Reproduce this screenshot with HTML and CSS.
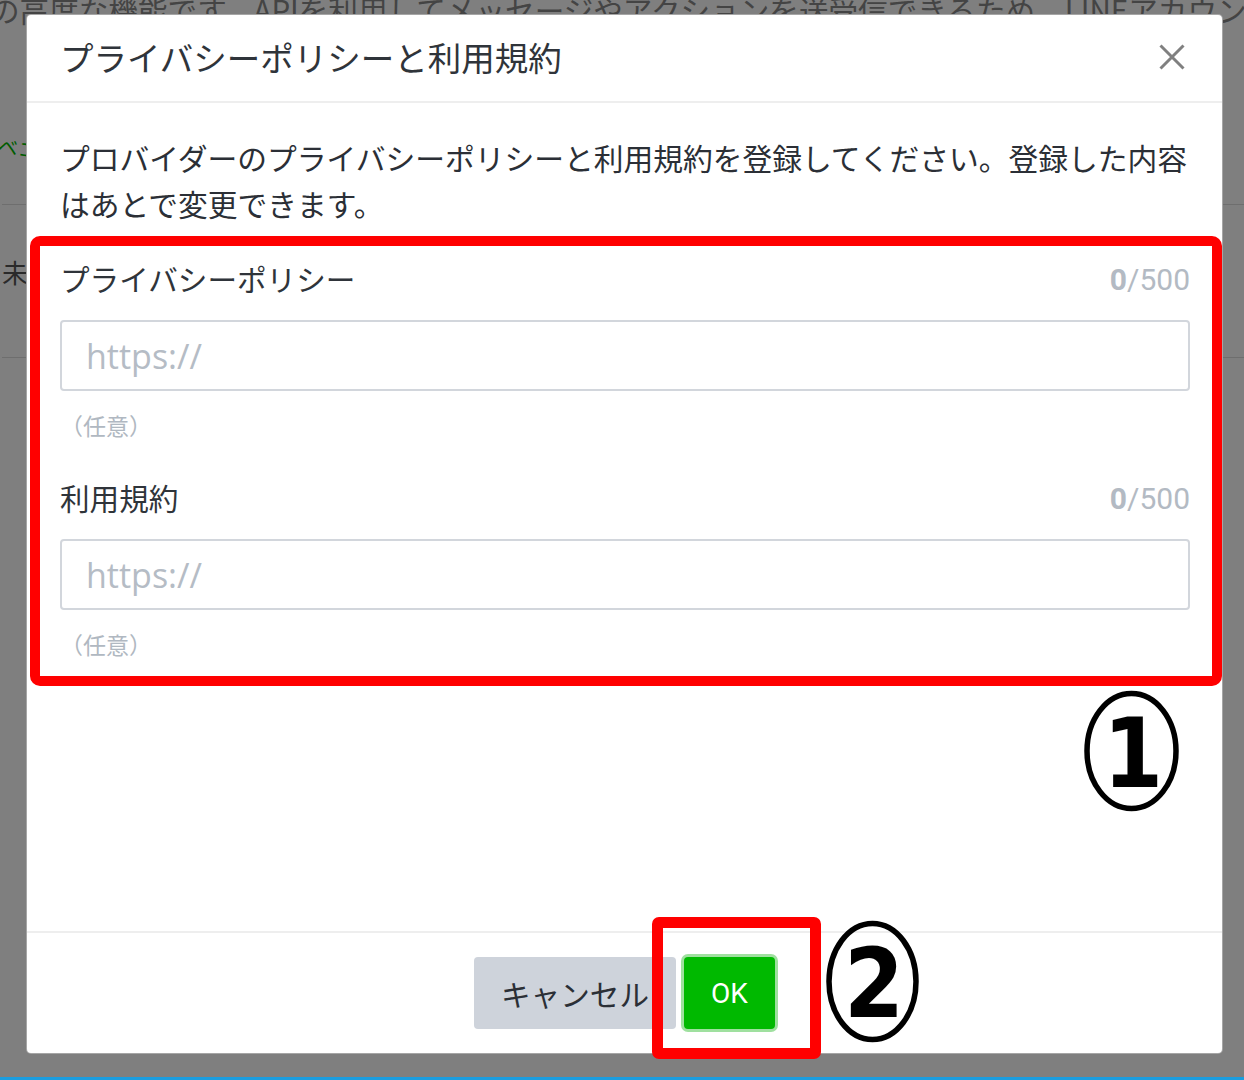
FILE: index.html
```html
<!DOCTYPE html>
<html lang="ja">
<head>
  <meta charset="UTF-8">
  <meta name="viewport" content="width=device-width, initial-scale=1.0">
  <title>プライバシーポリシーと利用規約</title>
  <link rel="stylesheet" href="styles.css">
</head>
<body>

  <div class="page">
    <!-- 背景のページ -->
    <div class="bg">
      <p class="bg-lead">の高度な機能です。APIを利用してメッセージやアクションを送受信できるため、LINEアカウン</p>
      <div class="bg-row bg-row-first"><span class="bg-link">ベコ</span></div>
      <div class="bg-row bg-row-second"><span>未</span></div>
    </div>

    <div class="overlay">
      <div class="modal">
        <div class="modal-header">
          <h2 class="modal-title">プライバシーポリシーと利用規約</h2>
          <button class="modal-close" type="button">
            <svg width="26" height="26" viewBox="0 0 26 26">
              <path d="M1.5 1.5 L24.5 24.5 M24.5 1.5 L1.5 24.5" stroke="#808080" stroke-width="3" fill="none"/>
            </svg>
          </button>
        </div>

        <div class="modal-body">
          <p class="modal-desc">プロバイダーのプライバシーポリシーと利用規約を登録してください。登録した内容はあとで変更できます。</p>

          <div class="field">
            <div class="field-head">
              <label class="field-label">プライバシーポリシー</label>
              <span class="field-count"><b>0</b>/500</span>
            </div>
            <input class="field-input" type="text" placeholder="https://">
            <p class="field-hint">（任意）</p>
          </div>

          <div class="field">
            <div class="field-head">
              <label class="field-label">利用規約</label>
              <span class="field-count"><b>0</b>/500</span>
            </div>
            <input class="field-input" type="text" placeholder="https://">
            <p class="field-hint">（任意）</p>
          </div>
        </div>

        <div class="modal-footer">
          <button class="btn btn-cancel" type="button">キャンセル</button>
          <button class="btn btn-ok" type="button">OK</button>
        </div>

        <!-- 注釈 -->
        <div class="mark mark-fields"></div>
        <div class="mark mark-ok"></div>
        <svg class="num num-1" width="97" height="122" viewBox="0 0 97 122">
          <ellipse cx="48.5" cy="61" rx="44.5" ry="57.5" fill="none" stroke="#000" stroke-width="5.5"/>
          <text x="50" y="97" text-anchor="middle">1</text>
        </svg>
        <svg class="num num-2" width="95" height="123" viewBox="0 0 95 123">
          <ellipse cx="47.5" cy="61.5" rx="43.5" ry="58" fill="none" stroke="#000" stroke-width="5.5"/>
          <text x="49" y="97" text-anchor="middle">2</text>
        </svg>
      </div>
    </div>
  </div>
  <div class="bottom-bar"></div>

</body>
</html>
```

FILE: styles.css
```css
* {
  margin: 0;
  padding: 0;
  box-sizing: border-box;
}

body {
  font-family: "Noto Sans CJK JP", "Noto Sans", sans-serif;
  color: #2b2f36;
  background-color: #fff;
}

.page {
  position: relative;
  height: 1077px;
  overflow: hidden;
}

/* 背景 */
.bg {
  padding-left: 2px;
}

.bg-lead {
  margin-top: -12px;
  margin-left: -12px;
  font-size: 29.6px;
  line-height: 44px;
  white-space: nowrap;
  color: #888;
}

.bg-row {
  border-bottom: 1px solid #ddd;
  font-size: 26px;
  line-height: 30px;
  color: #555;
}

.bg-row-first {
  height: 173px;
  padding-top: 98px;
}

.bg-row-second {
  height: 153px;
  padding-top: 52px;
}

.bg-link {
  display: inline-block;
  margin-left: -4px;
  font-size: 20px;
  color: #00b900;
  transform: rotate(8deg);
}

.overlay {
  position: absolute;
  left: 0;
  top: 0;
  width: 100%;
  height: 100%;
  padding: 14px 0 0 26px;
  background-color: rgba(0, 0, 0, 0.5);
}

/* モーダル */
.modal {
  position: relative;
  width: 1197px;
  height: 1040px;
  display: flex;
  flex-direction: column;
  background-color: #fff;
  border: 1px solid rgba(0, 0, 0, 0.35);
  border-radius: 5px;
}

.modal-header {
  display: flex;
  justify-content: space-between;
  align-items: center;
  padding: 20px 37px 22px 33px;
  border-bottom: 2px solid #eeeeee;
}

.modal-title {
  font-size: 33.5px;
  font-weight: normal;
  line-height: 44px;
  color: #2f343a;
}

.modal-close {
  display: flex;
  border: 0;
  background: none;
}

.modal-body {
  flex: 1;
  padding: 31px 32px 0 33px;
}

.modal-desc {
  margin-right: -6px;
  margin-bottom: 31px;
  font-size: 29.75px;
  line-height: 46px;
}

.field + .field {
  margin-top: 34px;
}

.field-head {
  display: flex;
  justify-content: space-between;
  align-items: center;
  height: 44px;
}

.field-label {
  font-size: 29.6px;
  line-height: 44px;
  color: #2f343a;
}

.field-count {
  font-family: Roboto, "Noto Sans", sans-serif;
  font-size: 30px;
  color: #b3bac3;
}

.field-input {
  display: block;
  width: 100%;
  height: 71px;
  margin-top: 19px;
  padding: 0 24px;
  border: 2px solid #d2d6dc;
  border-radius: 4px;
  font-family: "Open Sans", "Noto Sans", sans-serif;
  font-size: 34px;
  outline: none;
}

.field-input::placeholder {
  color: #b5bcc5;
}

.field-hint {
  margin-top: 18px;
  font-size: 23px;
  line-height: 33px;
  color: #b0b8c1;
}

.modal-footer {
  display: flex;
  justify-content: center;
  align-items: center;
  gap: 8px;
  height: 122px;
  border-top: 2px solid #eeeeee;
}

.btn {
  height: 72px;
  padding: 0 27px;
  border: 0;
  border-radius: 4px;
  font-family: "Noto Sans CJK JP", sans-serif;
  font-size: 29.6px;
}

.btn-cancel {
  background-color: #ced3db;
  color: #2b2f36;
}

.btn-ok {
  width: 91px;
  padding: 0;
  font-family: Roboto, sans-serif;
  font-size: 28px;
  color: #fff;
  background-color: #00b900;
  box-shadow: 0 0 0 3px #9fe09f;
}

/* 注釈 */
.mark {
  position: absolute;
  border: 10px solid #ff0000;
  border-radius: 10px;
}

.mark-fields {
  left: 3px;
  top: 221px;
  width: 1192px;
  height: 450px;
}

.mark-ok {
  left: 625px;
  top: 902px;
  width: 169px;
  height: 142px;
  border-width: 11px;
  border-radius: 7px;
}

.num {
  position: absolute;
}

.num text {
  font-family: "DejaVu Sans Condensed", "DejaVu Sans", sans-serif;
  font-weight: bold;
  font-size: 96px;
  fill: #000;
}

.num-1 {
  left: 1056px;
  top: 675px;
}

.num-2 {
  left: 798px;
  top: 905px;
}

.bottom-bar {
  height: 3px;
  background-color: #1a9de0;
}
```
